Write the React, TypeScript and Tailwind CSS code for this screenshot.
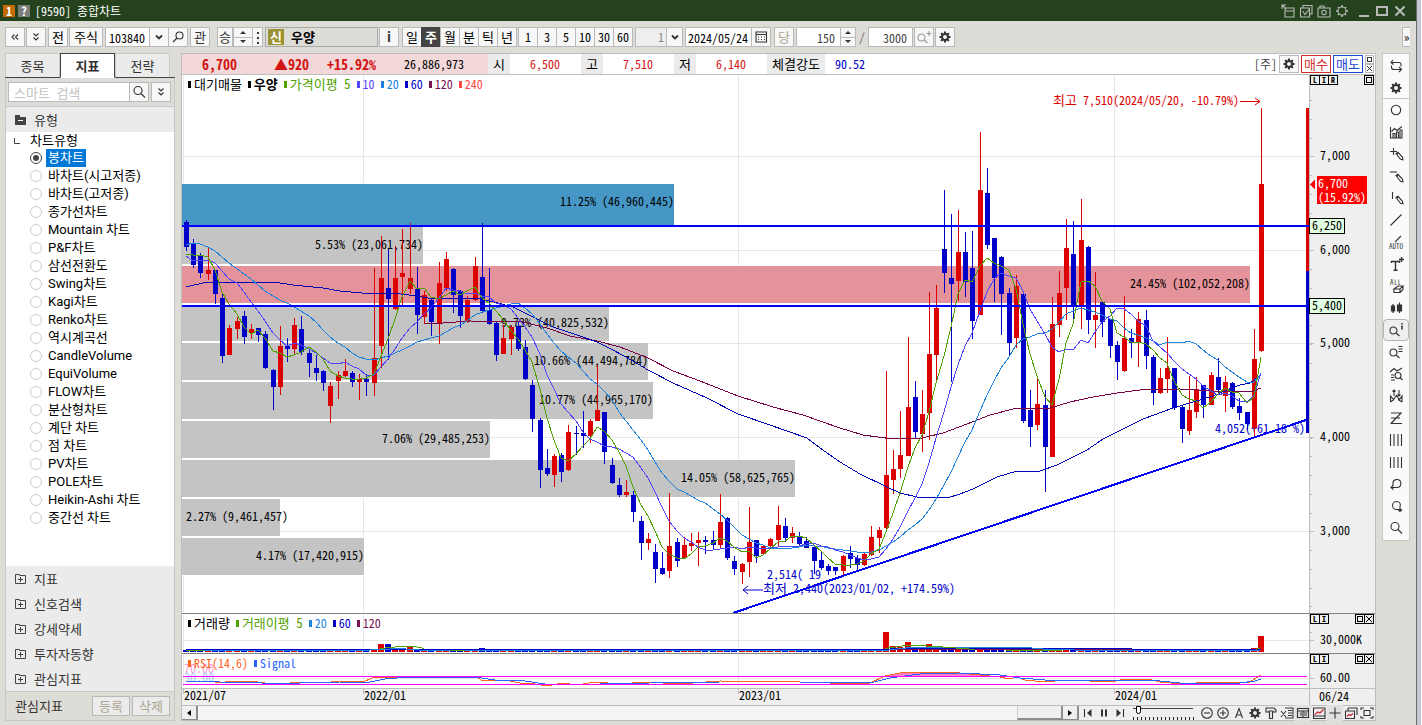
import { useState } from "react";
import type { ReactNode } from "react";
import clsx from "clsx";

// [rising, high, body top, body bottom, low]
type Candle = [number, number, number, number, number];
type Point = [number, number];

const CANDLES: Candle[] = [
  [0, 220, 222, 247, 251], [0, 239, 243, 265, 268], [0, 253, 255, 273, 278], [1, 247, 270, 274, 280], [0, 270, 270, 294, 304],
  [0, 294, 298, 356, 363], [1, 325, 328, 355, 355], [1, 317, 321, 329, 339], [0, 311, 316, 337, 344], [1, 324, 329, 333, 339],
  [0, 328, 328, 335, 342], [0, 331, 334, 368, 369], [0, 369, 370, 387, 410], [1, 326, 346, 387, 395], [0, 338, 346, 349, 362],
  [1, 318, 325, 349, 354], [0, 316, 329, 352, 355], [0, 349, 353, 363, 377], [0, 355, 368, 373, 381], [0, 370, 371, 383, 391],
  [1, 382, 386, 406, 423], [1, 371, 375, 381, 399], [1, 359, 371, 376, 377], [0, 371, 373, 382, 387], [1, 374, 379, 382, 400],
  [0, 374, 379, 382, 396], [1, 268, 358, 383, 396], [1, 236, 278, 346, 368], [0, 249, 288, 299, 360], [1, 246, 278, 309, 310],
  [1, 229, 273, 277, 305], [1, 223, 278, 289, 294], [0, 267, 289, 315, 334], [1, 291, 295, 317, 324], [0, 297, 300, 322, 336],
  [1, 262, 283, 324, 344], [1, 252, 259, 288, 291], [0, 268, 269, 295, 313], [0, 290, 291, 316, 328], [1, 296, 300, 322, 323],
  [1, 257, 266, 300, 301], [0, 223, 277, 311, 313], [0, 268, 310, 324, 325], [0, 322, 323, 355, 361], [1, 325, 338, 354, 354],
  [1, 325, 327, 339, 355], [0, 322, 326, 349, 351], [0, 340, 347, 379, 380], [0, 380, 385, 419, 432], [0, 418, 420, 470, 488],
  [0, 449, 468, 474, 476], [1, 454, 456, 475, 487], [0, 453, 455, 472, 482], [1, 425, 432, 470, 471], [0, 426, 433, 434, 455],
  [0, 411, 433, 436, 448], [1, 419, 421, 436, 443], [1, 365, 410, 421, 421], [0, 412, 412, 452, 464], [0, 458, 465, 483, 484],
  [0, 478, 485, 495, 497], [1, 480, 492, 495, 497], [0, 491, 495, 512, 522], [0, 516, 521, 543, 560], [1, 533, 539, 543, 550],
  [0, 544, 552, 569, 583], [0, 552, 568, 574, 575], [1, 493, 546, 571, 578], [0, 538, 542, 561, 567], [1, 537, 545, 558, 559],
  [1, 533, 543, 546, 551], [1, 532, 540, 543, 566], [0, 536, 540, 542, 554], [0, 531, 540, 545, 549], [1, 494, 522, 545, 548],
  [0, 517, 518, 558, 560], [0, 556, 561, 569, 575], [1, 563, 564, 572, 584], [1, 507, 542, 562, 577], [0, 540, 540, 556, 563],
  [1, 546, 546, 554, 555], [1, 538, 539, 546, 547], [1, 506, 525, 540, 546], [0, 518, 526, 538, 542], [1, 527, 533, 538, 543],
  [0, 532, 536, 544, 546], [0, 537, 541, 548, 548], [0, 547, 547, 561, 574], [0, 552, 560, 568, 570], [0, 564, 566, 571, 575],
  [0, 567, 567, 571, 575], [1, 555, 556, 571, 576], [0, 546, 553, 559, 568], [0, 555, 558, 565, 572], [1, 552, 554, 565, 566],
  [1, 526, 537, 555, 556], [1, 527, 530, 538, 553], [1, 371, 475, 528, 529], [1, 450, 469, 480, 494], [1, 411, 455, 469, 478],
  [1, 337, 407, 456, 456], [0, 381, 397, 432, 438], [1, 390, 414, 434, 452], [1, 292, 354, 413, 440], [1, 285, 308, 355, 381],
  [0, 190, 249, 273, 293], [0, 214, 278, 284, 382], [1, 210, 252, 281, 301], [0, 232, 252, 282, 297], [0, 231, 268, 321, 339],
  [1, 132, 190, 315, 315], [0, 168, 193, 245, 249], [0, 238, 238, 278, 302], [0, 256, 257, 294, 335], [0, 288, 293, 343, 356],
  [1, 275, 286, 338, 348], [0, 294, 294, 421, 423], [0, 390, 410, 427, 447], [1, 377, 404, 425, 430], [0, 390, 405, 447, 492],
  [1, 297, 324, 457, 457], [1, 271, 293, 325, 337], [1, 219, 248, 288, 320], [0, 221, 254, 306, 321], [1, 199, 240, 306, 329],
  [0, 246, 247, 320, 334], [1, 272, 315, 320, 348], [0, 301, 302, 322, 337], [0, 319, 319, 346, 358], [0, 341, 345, 362, 380],
  [1, 296, 338, 371, 372], [0, 329, 338, 343, 358], [1, 312, 319, 342, 367], [0, 310, 320, 356, 369], [0, 355, 357, 393, 405],
  [1, 368, 378, 393, 394], [1, 337, 368, 379, 393], [0, 368, 368, 408, 410], [0, 406, 407, 429, 443], [1, 376, 410, 431, 435],
  [1, 377, 389, 412, 418], [0, 385, 385, 405, 418], [1, 372, 375, 405, 405], [0, 358, 377, 390, 394], [1, 376, 382, 396, 412],
  [0, 382, 383, 407, 409], [0, 398, 406, 413, 420], [0, 412, 412, 424, 430], [1, 329, 359, 428, 436], [1, 108, 184, 351, 352],
];

const MA5_HEAD = [254, 255, 255, 257];
const MA10_HEAD = [256, 261, 260, 260, 263, 271, 279, 283, 292];
const MA20_HEAD = [245, 243, 244, 247, 251, 257, 263, 269, 274, 279, 285, 291, 296, 300, 303, 307, 311, 316, 322];

const MA60: Point[] = [
  [186, 287], [207, 282], [258, 282], [280, 283], [293, 285], [323, 288], [340, 291], [373, 294], [393, 293], [417, 296],
  [433, 299], [453, 298], [480, 299], [490, 301], [513, 307], [533, 317], [553, 327], [577, 335], [597, 342], [613, 350],
  [633, 361], [648, 370], [673, 383], [707, 398], [738, 414], [767, 424], [807, 438], [820, 448], [840, 462], [860, 474],
  [887, 487], [900, 493], [917, 497], [947, 498], [960, 494], [973, 489], [997, 477], [1017, 471], [1040, 471], [1057, 465],
  [1087, 450], [1103, 439], [1143, 419], [1173, 408], [1193, 402], [1213, 396], [1227, 390], [1240, 385], [1250, 383], [1261, 375],
];

const MA120: Point[] = [
  [425, 324], [443, 323], [470, 321], [523, 322], [547, 328], [570, 336], [597, 341], [620, 347], [648, 358], [673, 371],
  [700, 381], [738, 396], [773, 407], [803, 415], [820, 421], [840, 428], [863, 435], [893, 439], [922, 438], [943, 433],
  [967, 424], [990, 415], [1017, 408], [1050, 408], [1070, 402], [1093, 397], [1117, 393], [1140, 390], [1180, 389],
  [1213, 391], [1253, 391], [1261, 388],
];

const RSI: Point[] = [
  [186, 681], [213, 681], [218, 683], [233, 681], [250, 681], [265, 683], [275, 685], [290, 683], [305, 682], [318, 683],
  [345, 681], [363, 682], [372, 678], [380, 677], [465, 677], [478, 678], [483, 681], [505, 680], [520, 683], [535, 684],
  [547, 686], [562, 683], [577, 685], [595, 682], [620, 684], [645, 682], [680, 684], [720, 681], [800, 682], [830, 683],
  [870, 683], [885, 676], [900, 673], [930, 672], [960, 673], [980, 675], [1000, 677], [1009, 679], [1017, 677], [1025, 680],
  [1045, 682], [1065, 680], [1090, 681], [1116, 681], [1125, 679], [1148, 679], [1160, 682], [1182, 684], [1210, 682],
  [1240, 683], [1250, 682], [1256, 678], [1261, 675],
];

const SIGNAL: Point[] = [
  [186, 681], [220, 682], [262, 683], [300, 683], [340, 682], [370, 682], [385, 679], [410, 677], [475, 677], [495, 680],
  [525, 681], [545, 684], [600, 684], [650, 683], [720, 682], [800, 682], [870, 683], [890, 678], [920, 674], [960, 673],
  [1000, 675], [1020, 678], [1045, 680], [1150, 680], [1180, 683], [1240, 683], [1255, 681], [1261, 679],
];

// bar tops of the weeks whose volume stands out, by candle index
const VOLUME_TOPS: Record<number, number> = {
  27: 644, 28: 644, 30: 648, 31: 647, 41: 648, 97: 632, 98: 646, 99: 647, 100: 642, 101: 647, 103: 644, 104: 646,
  105: 648, 110: 647, 124: 648, 148: 648, 149: 636,
};

const PROFILE = [
  { y: 184, h: 41, x2: 674, fill: "#4697c6", label: "11.25% (46,960,445)" },
  { y: 227, h: 37, x2: 423, fill: "#c4c4c4", label: "5.53% (23,061,734)" },
  { y: 266, h: 37, x2: 1250, fill: "#e5939a", label: "24.45% (102,052,208)" },
  { y: 305, h: 36, x2: 609, fill: "#c4c4c4", label: "9.73% (40,825,532)" },
  { y: 343, h: 37, x2: 648, fill: "#c4c4c4", label: "10.66% (44,494,784)" },
  { y: 382, h: 37, x2: 653, fill: "#c4c4c4", label: "10.77% (44,965,170)" },
  { y: 421, h: 37, x2: 490, fill: "#c4c4c4", label: "7.06% (29,485,253)" },
  { y: 460, h: 37, x2: 795, fill: "#c4c4c4", label: "14.05% (58,625,765)" },
  { y: 499, h: 37, x2: 280, fill: "#c4c4c4", label: "2.27% (9,461,457)" },
  { y: 538, h: 37, x2: 364, fill: "#c4c4c4", label: "4.17% (17,420,915)" },
];

const CHART_TYPES = [
  "봉차트", "바차트(시고저종)", "바차트(고저종)", "종가선차트", "Mountain 차트", "P&F차트", "삼선전환도", "Swing차트",
  "Kagi차트", "Renko차트", "역시계곡선", "CandleVolume", "EquiVolume", "FLOW차트", "분산형차트", "계단 차트", "점 차트",
  "PV차트", "POLE차트", "Heikin-Ashi 차트", "중간선 차트",
];

const RED = "#dc0000";
const BLUE = "#0000c8";
const GRID = "#e6e6e6";

const candleX = (i: number) => Math.round(186 + i * 7.215);
const toPoints = (points: Point[]) => points.map((p) => p.join(",")).join(" ");

function movingAverage(period: number, head: number[]): Point[] {
  const closes = CANDLES.map(([up, , top, bottom]) => (up ? top : bottom));
  return closes.map((_, i) => {
    if (i < head.length) return [candleX(i), head[i]];
    const part = closes.slice(i - period + 1, i + 1);
    return [candleX(i), Math.round(part.reduce((a, b) => a + b, 0) / period)];
  });
}

function Icon({ children, size = 16 }: { children: ReactNode; size?: number }) {
  return (
    <svg width={size} height={size} viewBox="0 0 16 16" fill="none" stroke="currentColor" strokeWidth={1.1} className="shrink-0 overflow-visible">
      {children}
    </svg>
  );
}

const gear = (
  <>
    <circle cx="8" cy="8" r="3" strokeWidth="2" />
    <path strokeWidth="2" d="M8 2.5v2M8 11.5v2M2.5 8h2M11.5 8h2M4.1 4.1l1.4 1.4M10.5 10.5l1.4 1.4M4.1 11.9l1.4-1.4M10.5 5.5l1.4-1.4" />
  </>
);
const pencil = <path d="M8 7.5l2-1.2l4.500 5l.5 2.500l-2.500-.5zM10 6.500l-1 2" />;
const lens = <path d="M11 6.5a4 4 0 1 1-8 0a4 4 0 0 1 8 0zM10 9.5l4 4" />;
const lensSmall = <path d="M9 8.5a3.5 3.5 0 1 1-7 0a3.5 3.5 0 0 1 7 0zM8 11l3.5 3" />;
const chevrons = <path d="M5.5 4.5l2.5 2.5l2.5-2.5M5.5 8.5l2.5 2.5l2.5-2.5" />;

const TOOLS: { name: string; icon: ReactNode }[] = [
  { name: "새로고침", icon: <path d="M5 2L3 4.5l2.5 2M3 4.5h8q2 0 2 2v2M11 14l2.5-2.5L11 9M13.5 11.5H6q-2.500 0-2.500-2V7.500" /> },
  { name: "설정", icon: gear },
  { name: "원", icon: <circle cx="8" cy="8" r="4.700" /> },
  { name: "차트", icon: <path d="M2.500 3v11h12M5 14V9.500h2V14M8.500 14V8h2v6M12 14V6h2v8M3.500 7.500l3-3l2.500 2l5-4" /> },
  { name: "십자선", icon: <><path d="M5.500 2v7M2 5.500h7" />{pencil}</> },
  { name: "수평선", icon: <><path d="M2 4h7" />{pencil}</> },
  { name: "수직선", icon: <><path d="M4.500 2v7" />{pencil}</> },
  { name: "추세선", icon: <path d="M2.500 13.500l11-11" /> },
  { name: "자동추세선", icon: <><path d="M7 8l6-6" /><text x="1" y="15" fontSize="7" fill="currentColor" stroke="none">AUTO</text></> },
  { name: "문자", icon: <path strokeWidth="1.400" d="M3.500 7V5.500h8V7M7.500 5.500v9M5.500 14.300h4M13.500 1v5M11 3.500h5" /> },
  { name: "전체삭제", icon: <><text x="2" y="7" fontSize="7" fill="currentColor" stroke="none">All</text><path d="M6 11l4-3h5l-3 3zM6 11v3.500h6V11M12 14.500l3-3V8" /></> },
  { name: "캔들", icon: <path strokeWidth="1.200" fill="currentColor" d="M3.500 6h3v5h-3zM5 4v9M9.500 5h4v6h-4zM11.500 2.500V13" /> },
  { name: "정보", icon: <>{lensSmall}<path strokeWidth="1.500" d="M14 1v1.500M14 3.500v4" /></> },
  { name: "목록", icon: <>{lensSmall}<path d="M10.500 2.500h4M10.500 5h4M10.500 7.500h4" /></> },
  { name: "분석", icon: <path d="M2 6l4-3.500l3 2.500l5-3M3 9h3M3 11.500h3M3 14h4M13 9.500a3 3 0 1 1-6 0a3 3 0 0 1 6 0zM12 11.500l2.500 2.500" /> },
  { name: "파동", icon: <path d="M2.500 14V8l3 3.500l3-4l3 4L14 8v6M2.500 14l3.500-2.500M10 11.500l4 2.500M6 8V2M4.500 3.500L6 2l1.500 1.500M11 2v6M9.500 6.500L11 8l1.500-1.500" /> },
  { name: "되돌림", icon: <path d="M3 3h11M3 8h9M2.500 13.500h11.500M13 3L3 13.500" /> },
  { name: "피보나치", icon: <path d="M2.500 2v12M6 2v12M10 2v12M13.500 2v12" /> },
  { name: "주기선", icon: <path d="M2.500 3v11M6 3v11M10 3v11M13.500 3v11" /> },
  { name: "실행취소", icon: <path d="M5 9.500V6.500a4 4 0 1 1 4 5H3M5.500 9l-2.500 2.500l2.500 2" /> },
  { name: "다시실행", icon: <path d="M8.500 11.500a4 4 0 1 1 4-4M8.500 11.500h5M12 7.500v6M10 11.500l2 2l2-2" /> },
  { name: "확대", icon: lens },
];

function ToolButton({ label, className, children }: { label: string; className?: string; children: ReactNode }) {
  return (
    <button
      aria-label={label}
      className={clsx("flex h-5 shrink-0 items-center justify-center overflow-hidden border border-[#b9b9b9] bg-[#f7f7f7] text-[13px] text-[#333]", className)}
    >
      {children}
    </button>
  );
}

function Spinner({ label, className }: { label: string; className: string }) {
  return (
    <div className={clsx("flex h-5 shrink-0 flex-col border border-[#b9b9b9] bg-[#f7f7f7] text-[#333]", className)}>
      <button aria-label={`${label} 증가`} className="flex flex-1 items-center justify-center border-b border-[#b9b9b9]">
        <svg width="6" height="3"><path d="M0 3L3 0L6 3z" fill="currentColor" /></svg>
      </button>
      <button aria-label={`${label} 감소`} className="flex flex-1 items-center justify-center">
        <svg width="6" height="3"><path d="M0 0L3 3L6 0z" fill="currentColor" /></svg>
      </button>
    </div>
  );
}

function TitleBar() {
  return (
    <header className="flex h-[21px] items-center bg-[#24431c] pr-2 pl-[3px] text-white">
      <span className="flex h-3 w-3 items-center justify-center bg-[#c46a04] text-xs font-bold">1</span>
      <span className="ml-[3px] flex h-3 w-3 items-center justify-center bg-[#7d7d7d] text-xs font-bold">?</span>
      <h1 className="ml-[5px] text-xs">[9590] 종합차트</h1>
      <div className="ml-auto flex items-center gap-[2px] text-[#b9b9b9]">
        <button aria-label="분리"><Icon><path d="M5 5h9v9H5zM5 8h9M2 6V2h4M2 2l4 4" /></Icon></button>
        <button aria-label="복사"><Icon><path d="M2.500 5h9v9h-9zM5 5V2.500h9V11H11.500M4.500 8l2.500 3.500l4-5" /></Icon></button>
        <button aria-label="캡처"><Icon><path d="M2 5h12v9H2zM4 5V3h4v2" /><circle cx="8" cy="9.500" r="2.200" /></Icon></button>
        <button aria-label="환경설정"><Icon><circle cx="8" cy="8" r="4" /><path strokeWidth="1.600" d="M8 2v2M8 12v2M2 8h2M12 8h2M4 4l1 1M11 11l1 1M4 12l1-1M11 5l1-1" /></Icon></button>
        <button aria-label="최소화" className="ml-1"><Icon><path strokeWidth="2" d="M3 13h10" /></Icon></button>
        <button aria-label="최대화"><Icon><path strokeWidth="2" d="M3 4h10v8H3z" /></Icon></button>
        <button aria-label="닫기"><Icon><path strokeWidth="2" d="M3.500 3.500l9 9M12.500 3.500l-9 9" /></Icon></button>
      </div>
    </header>
  );
}

function Toolbar() {
  const [unit, setUnit] = useState("주");

  return (
    <div className="flex h-8 items-center pl-[5px] text-xs text-black">
      <ToolButton label="이전" className="w-5"><Icon><path d="M7.500 5.500L5 8l2.500 2.500M11 5.500L8.500 8l2.500 2.500" /></Icon></ToolButton>
      <ToolButton label="펼치기" className="ml-px w-5"><Icon>{chevrons}</Icon></ToolButton>
      <ToolButton label="전체" className="ml-[2px] w-5"><span className="text-black">전</span></ToolButton>
      <ToolButton label="주식" className="ml-px w-[34px]"><span className="text-black">주식</span></ToolButton>
      <input aria-label="종목코드" defaultValue="103840" className="ml-[2px] h-5 w-[45px] border border-[#b9b9b9] bg-white pl-[3px] outline-none" />
      <ToolButton label="종목 목록" className="-ml-px w-5"><Icon><path strokeWidth="1.800" d="M5 6.500l3 3l3-3" /></Icon></ToolButton>
      <ToolButton label="종목 찾기" className="-ml-px w-5"><Icon><path d="M13 6.500a3.500 3.500 0 1 1-7 0a3.500 3.500 0 0 1 7 0zM7 9l-4 4" /></Icon></ToolButton>
      <ToolButton label="관심" className="ml-[2px] w-5">관</ToolButton>
      <ToolButton label="승" className="ml-[7px] w-4">승</ToolButton>
      <Spinner label="종목" className="w-5" />
      <ToolButton label="더보기" className="-ml-px w-[11px]"><Icon><path strokeWidth="2" strokeDasharray="2 3" d="M8 3v12" /></Icon></ToolButton>
      <div className="ml-[2px] flex h-5 w-[113px] items-center border border-[#a8a8a8] bg-[#dddcd7] pl-[2px] text-[13px]">
        <span className="flex h-4 w-4 items-center justify-center bg-[#9c9232] font-bold text-white">신</span>
        <span className="ml-[7px] font-bold">우양</span>
      </div>
      <ToolButton label="종목정보" className="ml-px w-5 font-bold">i</ToolButton>
      <div className="ml-[3px] flex text-[13px]">
        {["일", "주", "월", "분", "틱", "년"].map((u) => (
          <button
            key={u}
            onClick={() => setUnit(u)}
            className={clsx(
              "-mr-px h-5 w-5 border leading-[18px]",
              unit === u ? "border-[#444] bg-[#444] font-bold text-white" : "border-[#b9b9b9] bg-[#f7f7f7]",
            )}
          >
            {u}
          </button>
        ))}
      </div>
      <div className="ml-[2px] flex">
        {["1", "3", "5", "10", "30", "60"].map((n) => (
          <button key={n} className="-mr-px h-5 w-5 border border-[#b9b9b9] bg-[#f7f7f7]">{n}</button>
        ))}
      </div>
      <select aria-label="주기" disabled className="ml-[3px] h-5 w-8 appearance-none border border-[#b9b9b9] bg-[#eee] pl-[22px] text-[#888]">
        <option>1</option>
      </select>
      <ToolButton label="주기 목록" className="-ml-px w-[17px]"><Icon><path strokeWidth="1.800" d="M5 6.500l3 3l3-3" /></Icon></ToolButton>
      <input aria-label="기준일" defaultValue="2024/05/24" className="ml-[2px] h-5 w-[67px] border border-[#b9b9b9] bg-white pl-[2px] outline-none" />
      <ToolButton label="달력" className="-ml-px w-5"><Icon><path d="M3 3h10.500v10H3zM3 5.500h10.500M5 8h1M8 8h1M11 8h1M5 10.500h1M8 10.500h1M11 10.500h1" /></Icon></ToolButton>
      <ToolButton label="당일" className="ml-[3px] w-5"><span className="text-[#aaa691]">당</span></ToolButton>
      <input aria-label="표시 개수" defaultValue="150" className="ml-[2px] h-5 w-[45px] border border-[#b9b9b9] bg-white pr-[5px] text-right text-[#444] outline-none" />
      <Spinner label="표시 개수" className="-ml-px w-4" />
      <span className="mx-[3px] text-[#666]">/</span>
      <input aria-label="전체 개수" defaultValue="3000" className="h-5 w-[45px] border border-[#b9b9b9] bg-white pr-[5px] text-right text-[#444] outline-none" />
      <ToolButton label="차트 확대" className="ml-px w-5"><span className="text-[#999]"><Icon>{lensSmall}<path d="M13 2v5M10.500 4.500h5" /></Icon></span></ToolButton>
      <ToolButton label="차트 설정" className="ml-px w-5"><Icon>{gear}</Icon></ToolButton>
      <button aria-label="도구 더보기" className="mr-[6px] ml-auto h-5 w-2 border-y border-l border-[#b9b9b9] bg-[#f7f7f7] text-xs leading-4">»</button>
    </div>
  );
}

function Sidebar() {
  const [type, setType] = useState("봉차트");

  return (
    <aside className="flex w-[170px] shrink-0 flex-col text-[13px] text-[#333]">
      <div className="flex h-[25px] border-b border-[#444]" role="tablist">
        {["종목", "지표", "전략"].map((t) => (
          <button
            key={t}
            role="tab"
            aria-selected={t === "지표"}
            className={clsx(
              "w-[55px] border leading-[22px]",
              t === "지표" ? "-mb-px border-[#444] border-b-white bg-white font-bold" : "border-b-0 border-[#c8c8c4] bg-[#ebebeb]",
            )}
          >
            {t}
          </button>
        ))}
      </div>
      <div className="flex flex-1 flex-col border-x border-b border-[#c8c8c8]">
        <div className="flex h-7 items-center pl-[2px]">
          <input aria-label="스마트 검색" placeholder="스마트 검색" className="h-5 w-[122px] border border-[#b9b9b9] bg-white pl-[5px] outline-none placeholder:text-[#c4c4c4]" />
          <ToolButton label="검색" className="-ml-px w-5"><Icon>{lens}</Icon></ToolButton>
          <ToolButton label="검색 옵션" className="ml-[2px] w-5"><Icon>{chevrons}</Icon></ToolButton>
        </div>
        <button className="flex h-[26px] items-center border-t border-[#c8c8c8] bg-[#ebebeb] pl-[9px]">
          <svg width="11" height="10" className="mr-2"><path fill="#444" d="M0 0h5v2h6v8H0z" /><path stroke="#fff" d="M3 5.500h5" /></svg>
          유형
        </button>
        <fieldset className="flex-1 bg-white font-['Roboto','Noto_Sans_CJK_KR',sans-serif] text-[13px] leading-[18px] text-black">
          <legend className="float-left flex h-[17px] w-full items-center pl-2">
            <svg width="6" height="6" className="mr-[10px]"><path d="M.5 0v5.500H6" fill="none" stroke="#444" /></svg>
            차트유형
          </legend>
          {CHART_TYPES.map((name) => (
            <label key={name} className="flex h-[18px] w-full items-center pl-6">
              <input
                type="radio"
                name="chart-type"
                checked={type === name}
                onChange={() => setType(name)}
                className="h-3 w-3 shrink-0 appearance-none rounded-full border border-[#ccc] bg-white p-[2px] checked:border-[#444] checked:bg-[#444] checked:bg-clip-content"
              />
              <span className={clsx("ml-1 px-[2px]", type === name && "bg-[#0078d7] text-white")}>{name}</span>
            </label>
          ))}
        </fieldset>
        <div className="flex flex-col bg-[#ebebeb]">
          {["지표", "신호검색", "강세약세", "투자자동향", "관심지표"].map((s) => (
            <button key={s} className="flex h-[25px] items-center pl-[9px]">
              <svg width="11" height="10" className="mr-2" fill="none" stroke="#444"><path d="M.5 .5h4v1h6v8H.5zM3 5.500h5M5.500 3v5" /></svg>
              {s}
            </button>
          ))}
        </div>
        <div className="flex h-[29px] items-center gap-[2px] border-t border-[#c8c8c8] pr-1 pl-[9px]">
          <span className="mr-auto">관심지표</span>
          <button className="h-5 w-[38px] border border-[#b9b9b9] bg-[#ebebeb] leading-[18px] text-[#aaa691]">등록</button>
          <button className="h-5 w-[38px] border border-[#b9b9b9] bg-[#ebebeb] leading-[18px] text-[#aaa691]">삭제</button>
        </div>
      </div>
    </aside>
  );
}

function QuoteRow() {
  return (
    <div className="flex h-[22px] items-stretch border-y border-[#bdbdbd] bg-white text-xs leading-5 text-black">
      <div className="flex w-[306px] bg-[#f2d8d9]">
        <span className="w-[55px] text-right text-sm leading-5 font-bold text-[#d21414]">6,700</span>
        <span className="w-[72px] text-right text-sm leading-5 font-bold text-[#d21414]">▲920</span>
        <span className="w-[67px] text-right text-sm leading-5 font-bold text-[#d21414]">+15.92%</span>
        <span className="w-[88px] text-right">26,886,973</span>
      </div>
      <span className="w-[22px] bg-[#ebebeb] text-center text-[13px] leading-5">시</span>
      <span className="w-[71px] pr-[21px] text-right text-[#d21414]">6,500</span>
      <span className="w-[22px] bg-[#ebebeb] text-center text-[13px] leading-5">고</span>
      <span className="w-[71px] pr-[21px] text-right text-[#d21414]">7,510</span>
      <span className="w-[22px] bg-[#ebebeb] text-center text-[13px] leading-5">저</span>
      <span className="w-[71px] pr-[21px] text-right text-[#d21414]">6,140</span>
      <span className="w-[58px] bg-[#ebebeb] text-center text-[13px] leading-5">체결강도</span>
      <span className="pl-[10px] text-[#0000c8]">90.52</span>
      <div className="ml-auto flex items-center gap-[2px] pr-px">
        <span className="text-[#444]">[주]</span>
        <button aria-label="설정" className="flex h-[18px] w-5 items-center justify-center border border-[#b9b9b9] bg-[#f7f7f7] text-[#333]"><Icon>{gear}</Icon></button>
        <button className="h-[18px] w-[30px] border border-[#d22f2f] text-[13px] leading-4 text-[#d22f2f]">매수</button>
        <button className="h-[18px] w-[30px] border border-[#1c46d2] text-[13px] leading-4 text-[#1c46d2]">매도</button>
        <div className="flex flex-col">
          <button aria-label="창 최대화" className="flex h-[9px] w-[9px] items-center justify-center border border-[#b9b9b9]"><span className="h-[5px] w-[5px] border border-[#333]" /></button>
          <button aria-label="창 닫기" className="flex h-[9px] w-[9px] items-center justify-center border border-[#b9b9b9]"><svg width="5" height="5" stroke="#333"><path d="M0 0l5 5M5 0l-5 5" /></svg></button>
        </div>
      </div>
    </div>
  );
}

function Legend({ items }: { items: { text: string; className: string }[] }) {
  return (
    <ul className="absolute top-0 left-0 flex h-[18px] items-center gap-[6px] pl-[6px]">
      {items.map((item) => (
        <li key={item.text} className={clsx("flex items-center", item.className)}>
          <span className="mr-[3px] h-[7px] w-[3px] bg-current" />
          {item.text}
        </li>
      ))}
    </ul>
  );
}

function PaneButtons({ letters, close }: { letters: string[]; close?: boolean }) {
  return (
    <>
      <div className="absolute top-0 right-[37px] flex w-7">
        {letters.map((l) => (
          <button key={l} className="-mr-px flex h-[10px] w-[10px] items-center justify-center border border-black bg-[#efefef] text-[8px] leading-[8px] font-bold text-black">{l}</button>
        ))}
      </div>
      <div className="absolute top-0 right-px flex">
        <button aria-label="최대화" className="flex h-[10px] w-[10px] items-center justify-center border border-black"><span className="h-[6px] w-[6px] border border-black" /></button>
        {close && (
          <button aria-label="닫기" className="-ml-px flex h-[10px] w-[10px] items-center justify-center border border-black"><svg width="6" height="6" stroke="#000"><path d="M0 0l6 6M6 0l-6 6" /></svg></button>
        )}
      </div>
    </>
  );
}

function VerticalGrid({ y1, y2 }: { y1: number; y2: number }) {
  return (
    <>
      {[183, 363, 738, 1114].map((x) => (
        <rect key={x} x={x} y={y1} width="1" height={y2 - y1} fill={GRID} />
      ))}
    </>
  );
}

function PricePane() {
  const axis = [7000, 6000, 5000, 4000, 3000].map((price, i) => ({ price, y: 156 + Math.round(i * 93.7) }));
  const minor = Array.from({ length: 28 }, (_, i) => Math.round(100 + i * 18.75)).filter((y) => y < 610);

  return (
    <div className="relative">
      <svg viewBox="182 75 1193 538" className="block h-auto w-full text-xs" shapeRendering="crispEdges">
        <VerticalGrid y1={76} y2={612} />
        {axis.map(({ y }) => <rect key={y} x="182" y={y} width="1127" height="1" fill={GRID} />)}
        <rect x="1309" y="75" width="66" height="538" fill="#efefef" />
        {PROFILE.map((p) => (
          <g key={p.label}>
            <rect x="182" y={p.y - 1} width={p.x2 - 182} height={p.h + 2} fill="#fff" />
            <rect x="182" y={p.y} width={p.x2 - 182} height={p.h} fill={p.fill} />
          </g>
        ))}
        {PROFILE.map((p) => (
          <text key={p.label} x={Math.max(p.x2, 288)} y={p.y + 22} textAnchor="end">{p.label}</text>
        ))}
        <text x="1215" y="433" fill={BLUE}>4,052(+61.18 %)</text>
        <text x="767" y="579" fill={BLUE}>2,514( 19</text>
        <text x="763" y="593" fill={BLUE}><tspan fontSize="13">최저</tspan> 2,440(2023/01/02, +174.59%)</text>
        <path d="M763 590H743M748 586l-5 4l5 4" stroke={BLUE} fill="none" shapeRendering="auto" />
        <text x="1053" y="105" fill={RED}><tspan fontSize="13">최고</tspan> 7,510(2024/05/20, -10.79%)</text>
        <path d="M1240 101.500h20M1255 98l5 3.500l-5 3.500" stroke={RED} fill="none" shapeRendering="auto" />

        {CANDLES.map(([up, high, top, bottom, low], i) => (
          <g key={i} fill={up ? RED : BLUE}>
            <rect x={candleX(i)} y={high} width="1" height={low - high} />
            <rect x={candleX(i) - 2} y={top} width="5" height={Math.max(bottom - top, 1)} />
          </g>
        ))}
        <g fill="none" strokeWidth="1">
          <polyline points={toPoints(MA120)} stroke="#780046" />
          <polyline points={toPoints(MA60)} stroke="#0000b4" />
          <polyline points={toPoints(movingAverage(20, MA20_HEAD))} stroke="#1e82dc" />
          <polyline points={toPoints(movingAverage(10, MA10_HEAD))} stroke="#5046ff" />
          <polyline points={toPoints(movingAverage(5, MA5_HEAD))} stroke="#50a000" />
        </g>
        <path d="M733 613L1309 419" stroke="#00f" strokeWidth="2" />
        <rect x="1306" y="108" width="3" height="163" fill={RED} />
        <rect x="1306" y="271" width="3" height="162" fill={BLUE} />
        <rect x="182" y="225" width="1127" height="2" fill="#00f" />
        <rect x="182" y="305" width="1127" height="2" fill="#00f" />

        <rect x="1309" y="75" width="1" height="538" fill="#bdbdbd" />
        {minor.map((y) => <rect key={y} x="1310" y={y} width="2" height="1" fill="#bdbdbd" />)}
        {axis.map(({ price, y }) => (
          <g key={price}>
            <rect x="1310" y={y} width="4" height="1" fill="#bdbdbd" />
            <text x="1320" y={y + 4}>{price.toLocaleString("en-US")}</text>
          </g>
        ))}
        <path d="M1310 184l5-5v11z" fill="#f00" />
        <rect x="1317" y="176" width="50" height="28" fill="#f00" />
        <text x="1318" y="188" fill="#fff">6,700</text>
        <text x="1318" y="202" fill="#fff">(15.92%)</text>
        {[{ y: 218, label: "6,250" }, { y: 298, label: "5,400" }].map((b) => (
          <g key={b.label}>
            <rect x="1309.500" y={b.y + 0.5} width="35" height="15" fill="#e1ffe1" stroke="#000" />
            <text x="1312" y={b.y + 12}>{b.label}</text>
          </g>
        ))}
      </svg>
      <Legend
        items={[
          { text: "대기매물", className: "text-[13px] text-black" },
          { text: "우양", className: "text-[13px] text-black font-bold" },
          { text: "가격이평 5", className: "text-[13px] text-[#50a000]" },
          { text: "10", className: "text-xs text-[#5046ff]" },
          { text: "20", className: "text-xs text-[#1e82dc]" },
          { text: "60", className: "text-xs text-[#0000c8]" },
          { text: "120", className: "text-xs text-[#781450]" },
          { text: "240", className: "text-xs text-[#ff4646]" },
        ]}
      />
      <PaneButtons letters={["L", "I", "R"]} />
    </div>
  );
}

function VolumePane() {
  return (
    <div className="relative border-t border-[#828282]">
      <svg viewBox="182 614 1193 39" className="block h-auto w-full text-xs" shapeRendering="crispEdges">
        <VerticalGrid y1={615} y2={652} />
        <rect x="182" y="640" width="1127" height="1" fill={GRID} />
        {CANDLES.map(([up], i) => {
          const top = VOLUME_TOPS[i] ?? 650;
          return <rect key={i} x={candleX(i) - 3} y={top} width="6" height={652 - top} fill={up ? RED : BLUE} />;
        })}
        <g fill="none">
          <path d="M425 649.500H1260" stroke="#781450" />
          <path d="M186 649.500H880L900 648.500L1000 648.500L1261 649.500" stroke="#0000c8" />
          <path d="M186 650.500H360L400 648.500L425 650.500H885L910 647.500H1027L1048 649.500L1100 650.500H1260" stroke="#1e82dc" />
          <path d="M186 650.500H204M380 648.500L400 646.500H415L424 648.500M450 650.500H464M885 648.500L905 645.500H920L950 647.500L975 649.500M1006 650.500H1062M1256 649.500L1261 647.500" stroke="#50a000" />
        </g>
        <rect x="1309" y="614" width="66" height="39" fill="#efefef" />
        <rect x="1309" y="614" width="1" height="39" fill="#bdbdbd" />
        <rect x="1310" y="632" width="2" height="1" fill="#bdbdbd" />
        <rect x="1310" y="640" width="4" height="1" fill="#bdbdbd" />
        <text x="1320" y="644">30,000K</text>
      </svg>
      <Legend
        items={[
          { text: "거래량", className: "text-[13px] text-black" },
          { text: "거래이평 5", className: "text-[13px] text-[#50a000]" },
          { text: "20", className: "text-xs text-[#1e82dc]" },
          { text: "60", className: "text-xs text-[#0000c8]" },
          { text: "120", className: "text-xs text-[#781450]" },
        ]}
      />
      <PaneButtons letters={["L", "I"]} close />
    </div>
  );
}

function RsiPane() {
  return (
    <div className="relative border-t border-[#828282]">
      <svg viewBox="182 654 1193 34" className="block h-auto w-full text-xs" shapeRendering="crispEdges">
        <VerticalGrid y1={655} y2={687} />
        <rect x="182" y="678" width="1127" height="1" fill={GRID} />
        <text x="184" y="673" fill="#ff9bcd">70.00</text>
        <text x="184" y="682" fill="#9bcdff">30.00</text>
        <path d="M885 676L900 673L930 672L960 673L980 675L995 676z" fill="#ff82c8" />
        <polyline points={toPoints(RSI)} fill="none" stroke="#ff641e" />
        <polyline points={toPoints(SIGNAL)} fill="none" stroke="#2864ff" />
        <rect x="183" y="676" width="1124" height="1" fill="#f0f" />
        <rect x="183" y="684" width="1124" height="1" fill="#f0f" />
        <rect x="1309" y="654" width="66" height="34" fill="#efefef" />
        <rect x="1309" y="654" width="1" height="34" fill="#bdbdbd" />
        <rect x="1310" y="678" width="4" height="1" fill="#bdbdbd" />
        <text x="1320" y="682">60.00</text>
      </svg>
      <Legend
        items={[
          { text: "RSI(14,6)", className: "text-xs text-[#ff641e]" },
          { text: "Signal", className: "text-xs text-[#2864ff]" },
        ]}
      />
      <PaneButtons letters={["L", "I"]} close />
    </div>
  );
}

function DateAxis() {
  return (
    <svg viewBox="182 688 1193 17" className="block h-auto w-full bg-[#efefef] text-xs" shapeRendering="crispEdges">
      <rect x="182" y="688" width="1193" height="1" fill="#bdbdbd" />
      <rect x="1309" y="688" width="1" height="17" fill="#bdbdbd" />
      {[{ x: 183, d: "2021/07" }, { x: 363, d: "2022/01" }, { x: 738, d: "2023/01" }, { x: 1114, d: "2024/01" }].map(({ x, d }) => (
        <g key={d}>
          <rect x={x} y="688" width="1" height="6" fill="#bdbdbd" />
          <text x={x + 1} y="700">{d}</text>
        </g>
      ))}
      <text x="1319" y="701">06/24</text>
    </svg>
  );
}

const BOTTOM_TOOLS: { name: string; icon: ReactNode }[] = [
  { name: "축소", icon: <><circle cx="8" cy="8" r="5.300" /><path d="M5 8h6" /></> },
  { name: "확대", icon: <><circle cx="8" cy="8" r="5.300" /><path d="M5 8h6M8 5v6" /></> },
  { name: "글자", icon: <path d="M4.500 13L8 3.500L11.500 13M6 10h4" /> },
  { name: "설정", icon: gear },
  { name: "도구", icon: <path d="M3 3h8l2 2v2h-3V6H6v1H3zM6.500 7v6.500h3V7" /> },
  { name: "엑셀", icon: <path d="M6 3h8v10H6M9 5.500h4M9 8h4M9 10.500h4M2 6l5 6M7 6l-5 6" /> },
  { name: "표", icon: <path d="M2.500 3.500h11v9h-11zM2.500 6h11M5 8h2M9 8h3M5 10h2M9 10h3M8 6v6" /> },
  { name: "추이", icon: <><path d="M2.500 3h11.500v10.500H2.500zM2.500 11h11.500" /><path stroke="#c81e28" d="M4 9.500l3-2.500l2 1l3.500-3.500" /></> },
  { name: "십자", icon: <path d="M8 2.500v11M2.500 8h11" /> },
  { name: "창 겹치기", icon: <><path d="M5 3h9v7M2.500 6h9v7.500h-9zM5 3v3" /><path stroke="#c81e28" d="M4 11.500l2-2l1.500 1l2.500-2" /></> },
  { name: "전체화면", icon: <path d="M2 5V3h3M11 3h3v2M14 11v2h-3M5 13H2v-2M5 5.500h6v5H5z" /> },
];

function BottomBar() {
  return (
    <div className="flex h-4 items-center border-y border-[#bdbdbd] bg-[#efefef] text-[#333]">
      <button aria-label="왼쪽으로" className="flex h-full w-4 items-center justify-center border-r-2 border-b border-[#8c8c8c] bg-[#efefef]">
        <svg width="4" height="6"><path d="M4 0v6L0 3z" fill="#000" /></svg>
      </button>
      <div className="flex h-full flex-1 justify-end bg-[#f5f5f5]">
        <div className="h-full w-[46px] border-r-2 border-b-2 border-l border-[#8c8c8c] border-l-[#d0d0d0] bg-[#efefef]" />
      </div>
      <button aria-label="오른쪽으로" className="flex h-full w-4 items-center justify-center border-r-2 border-b border-[#8c8c8c] bg-[#efefef]">
        <svg width="4" height="6"><path d="M0 0v6L4 3z" fill="#000" /></svg>
      </button>
      <button aria-label="처음으로" className="ml-px"><Icon><path d="M4.500 4v8" /><path fill="currentColor" stroke="none" d="M11.500 4v8L7 8z" /></Icon></button>
      <button aria-label="일시정지"><Icon><path strokeWidth="2" d="M6 4.500v7M10 4.500v7" /></Icon></button>
      <button aria-label="끝으로"><Icon><path d="M11.500 4v8" /><path fill="currentColor" stroke="none" d="M4.500 4v8L9 8z" /></Icon></button>
      <div className="relative ml-[5px] h-full w-[62px]">
        <svg width="62" height="14" className="block" shapeRendering="crispEdges">
          <path d="M0 2.500h60" stroke="#444" />
          <path d="M0 12h62" stroke="#222" strokeWidth="3" strokeDasharray="1 3" />
        </svg>
        <input
          type="range"
          aria-label="재생 속도"
          min={0}
          max={20}
          defaultValue={1}
          className="absolute inset-0 h-2 w-full appearance-none bg-transparent [&::-webkit-slider-thumb]:h-2 [&::-webkit-slider-thumb]:w-[5px] [&::-webkit-slider-thumb]:appearance-none [&::-webkit-slider-thumb]:rounded-b-sm [&::-webkit-slider-thumb]:border [&::-webkit-slider-thumb]:border-black [&::-webkit-slider-thumb]:bg-white"
        />
      </div>
      <div className="ml-1 flex">
        {BOTTOM_TOOLS.map((t) => (
          <button key={t.name} aria-label={t.name} className={clsx((t.name === "표" || t.name === "십자") && "bg-[#e0e0e0]")}><Icon>{t.icon}</Icon></button>
        ))}
      </div>
    </div>
  );
}

export default function App() {
  return (
    <div className="flex min-h-screen bg-[#dddcd7] font-['Noto_Sans_Mono_CJK_KR','Noto_Sans_CJK_KR','Liberation_Mono',monospace]">
      <div className="min-w-0 flex-1">
        <TitleBar />
        <Toolbar />
        <div className="flex gap-[6px] pr-[6px] pb-1 pl-[5px]">
          <Sidebar />
          <main className="min-w-0 flex-1 border-x border-[#bdbdbd] bg-white">
            <QuoteRow />
            <PricePane />
            <VolumePane />
            <RsiPane />
            <DateAxis />
            <BottomBar />
          </main>
          <nav aria-label="그리기 도구" className="w-7 shrink-0 self-start border border-[#c8c8c8] bg-[#fafafa] py-px text-[#333]">
            {TOOLS.map((t, i) => (
              <button
                key={t.name}
                aria-label={t.name}
                className={clsx(
                  "flex h-[22px] w-full items-center justify-center",
                  i === 1 && "border-b border-[#c8c8c8]",
                  t.name === "정보" && "rounded border border-[#b4b4b4] bg-[#efefef]",
                )}
              >
                <Icon>{t.icon}</Icon>
              </button>
            ))}
          </nav>
        </div>
      </div>
      <div className="w-[6px] shrink-0 border-x border-l-[#6e6e6e] border-r-white bg-[#c3c9d0]" />
    </div>
  );
}
